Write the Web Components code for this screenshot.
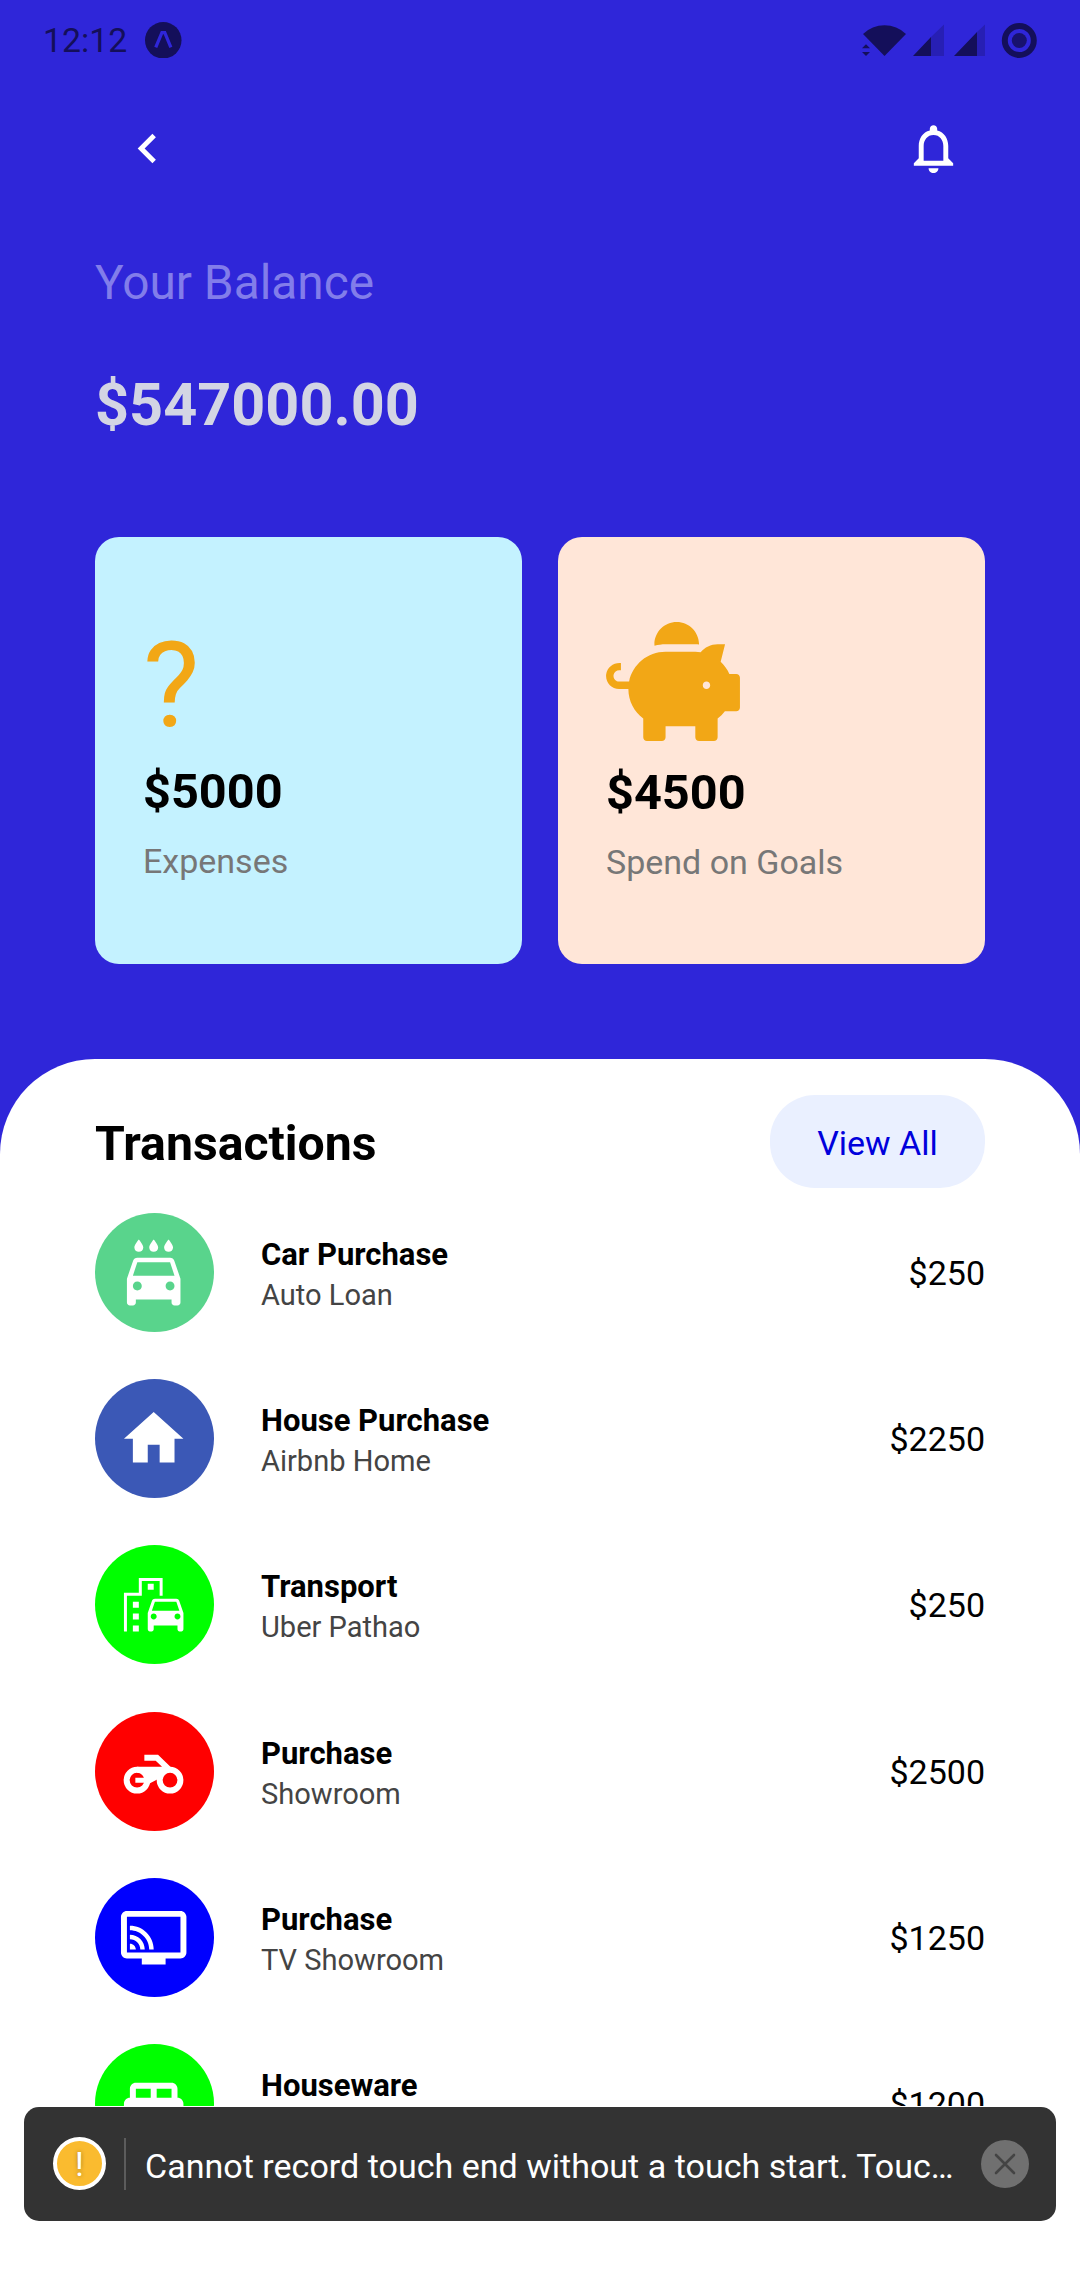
<!DOCTYPE html>
<html lang="en">
<head>
<meta charset="utf-8">
<title>Balance</title>
<style>
html, body { margin: 0; }
body { width: 1080px; height: 2280px; overflow: hidden; background: #2f26d9; font-family: Roboto, sans-serif; }
</style>
</head>
<body>
<balance-screen>
  <status-bar slot="top" time="12:12"></status-bar>
  <nav-bar slot="top"></nav-bar>
  <balance-summary slot="top" label="Your Balance" amount="$547000.00"></balance-summary>
  <stat-card slot="cards" amount="$5000" label="Expenses" style="--card:#c4f2ff"><span style="font-size:119.5px;line-height:140px;margin-bottom:5px">?</span></stat-card>
  <stat-card slot="cards" amount="$4500" label="Spend on Goals" style="--card:#ffe6d8;--nudge:1px"><ui-icon name="piggy" style="width:134px;height:119px;margin-bottom:20.5px"></ui-icon></stat-card>
  <transaction-row icon="wash" color="#59d48c" name="Car Purchase" detail="Auto Loan" amount="$250"></transaction-row>
  <transaction-row icon="home" color="#3b58b6" name="House Purchase" detail="Airbnb Home" amount="$2250"></transaction-row>
  <transaction-row icon="transport" color="#00ff00" name="Transport" detail="Uber Pathao" amount="$250"></transaction-row>
  <transaction-row icon="motorcycle" color="#ff0000" name="Purchase" detail="Showroom" amount="$2500"></transaction-row>
  <transaction-row icon="tv" color="#0000ff" name="Purchase" detail="TV Showroom" amount="$1250"></transaction-row>
  <transaction-row icon="bed" color="#00ff00" name="Houseware" amount="$1200"></transaction-row>
  <warning-toast slot="toast">Cannot record touch end without a touch start. Touc…</warning-toast>
</balance-screen>
<script>
const ICONS = {
  back: ['0 0 24 24', '<path d="M15.41 7.41 14 6l-6 6 6 6 1.41-1.41L10.83 12z"/>'],
  bell: ['0 0 24 24', '<path d="M12 22c1.1 0 2-.9 2-2h-4c0 1.1.89 2 2 2zm6-6v-5c0-3.07-1.64-5.64-4.5-6.32V4c0-.83-.67-1.5-1.5-1.5s-1.5.67-1.5 1.5v.68C7.63 5.36 6 7.92 6 11v5l-2 2v1h16v-1l-2-2zm-2 1H8v-6c0-2.48 1.51-4.5 4-4.5s4 2.02 4 4.5v6z"/>'],
  piggy: ['0 0 576 512', '<path d="M560 224h-29.5c-8.8-20-21.6-37.7-37.4-52.5L512 96h-32c-29.4 0-55.4 13.5-73 34.3-7.6-1.1-15.1-2.3-23-2.3H256c-77.4 0-141.9 55-156.8 128H56c-14.8 0-26.5-13.5-23.5-28.8C34.7 215.8 45.4 208 57 208h7v-32h-6c-28.5 0-53.9 20.4-57.5 48.6C-3.9 258.8 22.7 288 56 288h40c0 52.2 25.4 98.1 64 127.3V496c0 8.8 7.2 16 16 16h64c8.8 0 16-7.2 16-16v-48h128v48c0 8.8 7.2 16 16 16h64c8.8 0 16-7.2 16-16v-80.7c11.8-8.9 22.3-19.4 31.3-31.3H560c8.8 0 16-7.2 16-16V240c0-8.8-7.2-16-16-16zm-128 64c-8.8 0-16-7.2-16-16s7.2-16 16-16 16 7.2 16 16-7.2 16-16 16zM256 96h128c5.4 0 10.7.4 15.9.8 0-.3.1-.5.1-.8 0-53-43-96-96-96s-96 43-96 96c0 2.1.5 4.1.6 6.2 15.2-3.9 31-6.2 47.4-6.2z"/>'],
  wash: ['0 0 24 24', '<path d="M17 5c.83 0 1.5-.67 1.5-1.5 0-1-1.5-2.7-1.5-2.7s-1.5 1.7-1.5 2.7c0 .83.67 1.5 1.5 1.5zm-5 0c.83 0 1.5-.67 1.5-1.5 0-1-1.5-2.7-1.5-2.7s-1.5 1.7-1.5 2.7c0 .83.67 1.5 1.5 1.5zM7 5c.83 0 1.5-.67 1.5-1.5C8.5 2.5 7 .8 7 .8S5.5 2.5 5.5 3.5C5.5 4.33 6.17 5 7 5zm11.92 3.01C18.72 7.42 18.16 7 17.5 7h-11c-.66 0-1.21.42-1.42 1.01L3 14v8c0 .55.45 1 1 1h1c.55 0 1-.45 1-1v-1h12v1c0 .55.45 1 1 1h1c.55 0 1-.45 1-1v-8l-2.08-5.99zM6.5 18c-.83 0-1.5-.67-1.5-1.5S5.67 15 6.5 15s1.5.67 1.5 1.5S7.33 18 6.5 18zm11 0c-.83 0-1.5-.67-1.5-1.5s.67-1.5 1.5-1.5 1.5.67 1.5 1.5-.67 1.5-1.5 1.5zM5 13l1.5-4.5h11L19 13H5z"/>'],
  home: ['0 0 24 24', '<path d="M10 20v-6h4v6h5v-8h3L12 3 2 12h3v8z"/>'],
  transport: ['0 0 24 24', '<path d="M20.57 10.66c-.14-.4-.52-.66-.97-.66h-7.19c-.46 0-.83.26-.98.66L10 14.77l.01 5.51c0 .38.31.72.69.72h.62c.38 0 .68-.38.68-.76V19h8v1.24c0 .38.31.76.69.76h.61c.38 0 .69-.34.69-.72l.01-1.37v-4.14l-1.43-4.11zM12.41 11h7.19l1.03 3h-9.25l1.03-3zM12 17c-.55 0-1-.45-1-1s.45-1 1-1 1 .45 1 1-.45 1-1 1zm8 0c-.55 0-1-.45-1-1s.45-1 1-1 1 .45 1 1-.45 1-1 1z"/><path d="M14 9h1V3H7v5H2v13h1V9h5V4h6zM5 11h2v2H5zM10 5h2v2h-2zM5 15h2v2H5zM5 19h2v2H5z"/>'],
  motorcycle: ['-107 -107 214 214', '<g fill="none" stroke="currentColor" stroke-width="18"><circle cx="-50" cy="25.500" r="31"/><circle cx="49" cy="25.500" r="31"/></g><path d="M-28-51h41L51-14 48-5H-50v-10h75L6-33h-34zM-50-15H48L27 4 9 24-11 35-15 20-32 3h-18zM-55 18h40v15h-40z"/>'],
  tv: ['0 0 24 24', '<path d="M21 3H3c-1.100 0-2 .9-2 2v12c0 1.100.9 2 2 2h5v2h8v-2h5c1.100 0 2-.9 2-2V5c0-1.100-.9-2-2-2zm0 14H3V5h18zM4 14v2h2c0-1.110-.89-2-2-2zm0-3v1.500c1.930 0 3.500 1.570 3.500 3.500H9c0-2.760-2.240-5-5-5zm0-3v1.500c3.590 0 6.500 2.910 6.500 6.500H12c0-4.420-3.580-8-8-8z"/>'],
  bed: ['0 0 24 24', '<path d="M22 12c0-1.100-.9-2-2-2V7c0-1.100-.9-2-2-2H6c-1.100 0-2 .9-2 2v3c-1.100 0-2 .9-2 2v5h1.330L4 19h1l.67-2h12.670l.66 2h1l.67-2H22v-5zm-4-2h-5V7h5v3zM6 7h5v3H6V7z"/>'],
  badge: ['0 0 36 36', '<circle cx="18" cy="18" r="18" fill="#140f5a"/><path d="M10.600 25 16.700 10.500h2.800L25.500 25" fill="none" stroke="#2f26d9" stroke-width="3.200"/>'],
  signals: ['860 20 180 40', '<g fill="#140f5a"><path d="M863 34a31 31 0 0 1 43 0L884.500 56z"/><path d="M862 48.300l4-4 4 4zM862 52l4 4 4-4z"/><path d="M913 56l18-19v19zM954 56l23-24v24z"/><circle cx="1019.300" cy="40.500" r="7.500" opacity=".85"/></g><path d="M931 37l13-12.500V56h-13zM977 32l8-7.500V56h-8z" fill="#271fb4"/><circle cx="1019.300" cy="40.500" r="14.500" fill="none" stroke="#140f5a" stroke-width="6"/>'],
  close: ['-24 -24 48 48', '<path d="M-9-9 9 9M9-9-9 9" fill="none" stroke="#444" stroke-width="2.600" stroke-linecap="round"/>']
};

class Base extends HTMLElement {
  connectedCallback() {
    this.attachShadow({ mode: 'open' }).innerHTML =
      '<style>:host,*{box-sizing:border-box}' + this.css() + '</style>' + this.html();
  }
  a(name) { return this.getAttribute(name) || ''; }
}

customElements.define('ui-icon', class extends Base {
  css() { return ':host{display:block;flex:none}svg{display:block;width:100%;height:100%}'; }
  html() { const [box, body] = ICONS[this.a('name')]; return `<svg viewBox="${box}" fill="currentColor">${body}</svg>`; }
});

customElements.define('balance-screen', class extends Base {
  css() { return `
    :host{display:flex;flex-direction:column;width:1080px;height:2280px;background:#2f26d9}
    .cards{display:flex;justify-content:space-between;padding:0 95px;margin-top:92.300px}
    .panel{display:flex;flex-direction:column;flex:1;min-height:0;margin-top:94.700px;background:#fff;border-radius:95px 95px 0 0}
    .scroll{height:1047.300px;overflow:hidden;padding:36px 95px 0}
    .head{display:flex;justify-content:space-between;align-items:center;height:93px}
    h2{margin:0;padding-top:6px;font:700 48.200px/64px Roboto,sans-serif;color:#000}
    .all{display:flex;align-items:center;justify-content:center;width:215px;height:93px;padding-top:4px;border-radius:45px;background:#eaf0ff;color:#0000dc;font:400 34px/46px Roboto,sans-serif}
    .list{display:flex;flex-direction:column;gap:47.250px;margin-top:25.300px}
    .toast{padding:1px 24px 0}`; }
  html() { return `<slot name="top"></slot><div class="cards"><slot name="cards"></slot></div>
    <div class="panel"><div class="scroll"><div class="head"><h2>Transactions</h2><div class="all">View All</div></div>
    <div class="list"><slot></slot></div></div><div class="toast"><slot name="toast"></slot></div></div>`; }
});

customElements.define('status-bar', class extends Base {
  css() { return `:host{display:flex;align-items:center;height:80px;padding:0 40px 0 43px;color:#140f5a}
    .time{font:400 33.800px/46px Roboto,sans-serif;padding-top:2px;width:102px}
    .b{width:36.500px;height:36.500px}.s{width:180px;height:40px;margin-left:auto}`; }
  html() { return `<div class="time">${this.a('time')}</div><ui-icon class="b" name="badge"></ui-icon><ui-icon class="s" name="signals"></ui-icon>`; }
});

customElements.define('nav-bar', class extends Base {
  css() { return `:host{display:flex;align-items:center;justify-content:space-between;height:136px;padding:0 117px 0 117.500px;color:#fff}
    ui-icon{width:59px;height:59px}`; }
  html() { return `<ui-icon name="back"></ui-icon><ui-icon name="bell"></ui-icon>`; }
});

customElements.define('balance-summary', class extends Base {
  css() { return `:host{display:flex;flex-direction:column;gap:50px;padding:34.700px 95px 0}
    .l{font:400 47.800px/64px Roboto,sans-serif;color:#827dea}
    .v{font:700 59.400px/80px Roboto,sans-serif;color:#d3d5e4}`; }
  html() { return `<div class="l">${this.a('label')}</div><div class="v">${this.a('amount')}</div>`; }
});

customElements.define('stat-card', class extends Base {
  css() { return `:host{display:flex;flex-direction:column;width:427px;height:427px;padding:0 48px;border-radius:24px;background:var(--card)}
    .i{display:flex;flex-direction:column;justify-content:flex-end;align-items:flex-start;height:calc(223.400px + var(--nudge,0px));color:#f2a716}
    .v{font:700 48.700px/64px Roboto,sans-serif;color:#000}
    .l{font:400 34px/46px Roboto,sans-serif;color:#777;margin-top:13.300px}`; }
  html() { return `<div class="i"><slot></slot></div><div class="v">${this.a('amount')}</div><div class="l">${this.a('label')}</div>`; }
});

customElements.define('transaction-row', class extends Base {
  css() { return `:host{display:flex;align-items:center;gap:47px;height:119px}
    .c{display:flex;align-items:center;justify-content:center;width:119px;height:119px;padding-right:1.400px;border-radius:50%;color:#fff}
    .c ui-icon{width:71.400px;height:71.400px}
    .t{flex:1;height:82px;margin-top:5px}
    .n{font:700 31px/41px Roboto,sans-serif;color:#000}
    .d{font:400 29.050px/41px Roboto,sans-serif;color:#444}
    .m{font:400 34px/46px Roboto,sans-serif;color:#000;padding-top:1px}`; }
  html() { return `<div class="c" style="background:${this.a('color')}"><ui-icon name="${this.a('icon')}"></ui-icon></div>
    <div class="t"><div class="n">${this.a('name')}</div><div class="d">${this.a('detail')}</div></div><div class="m">${this.a('amount')}</div>`; }
});

customElements.define('warning-toast', class extends Base {
  css() { return `:host{display:flex;align-items:center;height:114px;padding:0 27px 0 29px;border-radius:15px;background:#333}
    .w{display:flex;align-items:center;justify-content:center;width:53px;height:53px;border:4.700px solid #fff;border-radius:50%;background:#fabb2f;color:#fff;font:400 34px/40px Roboto,sans-serif;text-shadow:0 0 4px rgba(0,0,0,.35)}
    .r{width:2px;height:52px;margin:0 19px 0 18px;background:#5c5c5c}
    .m{flex:1;white-space:nowrap;font:400 34.050px/46px Roboto,sans-serif;color:#fff;padding-top:5px}
    .x{width:48px;height:48px;border-radius:50%;background:#707070}`; }
  html() { return `<div class="w">!</div><div class="r"></div><div class="m"><slot></slot></div><div class="x"><ui-icon name="close"></ui-icon></div>`; }
});
</script>
</body>
</html>
